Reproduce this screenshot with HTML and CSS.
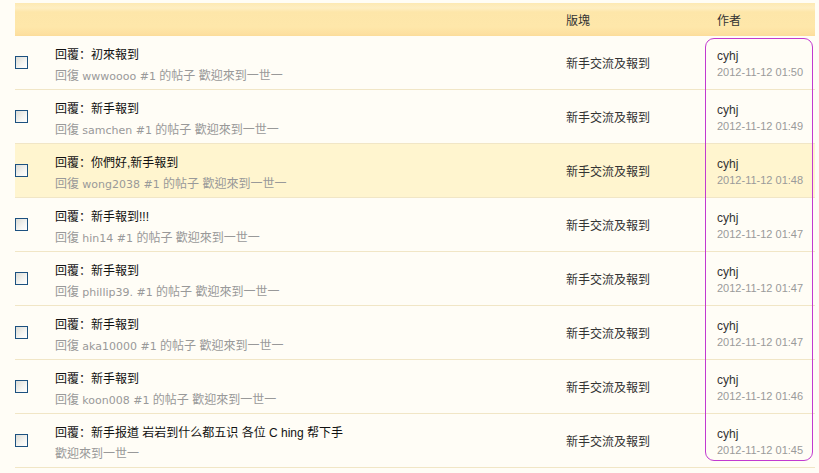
FILE: index.html
```html
<!DOCTYPE html>
<html lang="zh-Hant">
<head>
<meta charset="utf-8">
<title>帖子列表</title>
<link rel="stylesheet" href="styles.css">
</head>
<body>
<div class="list">
  <div class="head">
    <div></div>
    <div></div>
    <div class="h-forum">版塊</div>
    <div class="h-author">作者</div>
  </div>

  <div class="row">
    <div class="cb"><span class="box"></span></div>
    <div class="topic"><div class="t">回覆<span class="colon" lang="zh-Hans">：</span>初來報到</div><div class="s">回復 <span class="u">wwwoooo #1</span> 的帖子 歡迎來到一世一</div></div>
    <div class="forum">新手交流及報到</div>
    <div class="author"><div class="name">cyhj</div><div class="date">2012-11-12 01:50</div></div>
  </div>
  <div class="row">
    <div class="cb"><span class="box"></span></div>
    <div class="topic"><div class="t">回覆<span class="colon" lang="zh-Hans">：</span>新手報到</div><div class="s">回復 <span class="u">samchen #1</span> 的帖子 歡迎來到一世一</div></div>
    <div class="forum">新手交流及報到</div>
    <div class="author"><div class="name">cyhj</div><div class="date">2012-11-12 01:49</div></div>
  </div>
  <div class="row hl">
    <div class="cb"><span class="box"></span></div>
    <div class="topic"><div class="t">回覆<span class="colon" lang="zh-Hans">：</span>你們好,新手報到</div><div class="s">回復 <span class="u">wong2038 #1</span> 的帖子 歡迎來到一世一</div></div>
    <div class="forum">新手交流及報到</div>
    <div class="author"><div class="name">cyhj</div><div class="date">2012-11-12 01:48</div></div>
  </div>
  <div class="row">
    <div class="cb"><span class="box"></span></div>
    <div class="topic"><div class="t">回覆<span class="colon" lang="zh-Hans">：</span>新手報到!!!</div><div class="s">回復 <span class="u">hin14 #1</span> 的帖子 歡迎來到一世一</div></div>
    <div class="forum">新手交流及報到</div>
    <div class="author"><div class="name">cyhj</div><div class="date">2012-11-12 01:47</div></div>
  </div>
  <div class="row">
    <div class="cb"><span class="box"></span></div>
    <div class="topic"><div class="t">回覆<span class="colon" lang="zh-Hans">：</span>新手報到</div><div class="s">回復 <span class="u">phillip39. #1</span> 的帖子 歡迎來到一世一</div></div>
    <div class="forum">新手交流及報到</div>
    <div class="author"><div class="name">cyhj</div><div class="date">2012-11-12 01:47</div></div>
  </div>
  <div class="row">
    <div class="cb"><span class="box"></span></div>
    <div class="topic"><div class="t">回覆<span class="colon" lang="zh-Hans">：</span>新手報到</div><div class="s">回復 <span class="u">aka10000 #1</span> 的帖子 歡迎來到一世一</div></div>
    <div class="forum">新手交流及報到</div>
    <div class="author"><div class="name">cyhj</div><div class="date">2012-11-12 01:47</div></div>
  </div>
  <div class="row">
    <div class="cb"><span class="box"></span></div>
    <div class="topic"><div class="t">回覆<span class="colon" lang="zh-Hans">：</span>新手報到</div><div class="s">回復 <span class="u">koon008 #1</span> 的帖子 歡迎來到一世一</div></div>
    <div class="forum">新手交流及報到</div>
    <div class="author"><div class="name">cyhj</div><div class="date">2012-11-12 01:46</div></div>
  </div>
  <div class="row">
    <div class="cb"><span class="box"></span></div>
    <div class="topic"><div class="t">回覆<span class="colon" lang="zh-Hans">：</span>新手报道 岩岩到什么都五识 各位 C hing 帮下手</div><div class="s">歡迎來到一世一</div></div>
    <div class="forum">新手交流及報到</div>
    <div class="author"><div class="name">cyhj</div><div class="date">2012-11-12 01:45</div></div>
  </div>

  <div class="mark"></div>
</div>
</body>
</html>
```

FILE: styles.css
```css
html, body {
  margin: 0;
  padding: 0;
  background: #fffdf6;
}
body {
  font-family: "Liberation Sans", "Noto Sans CJK TC", sans-serif;
  font-size: 12px;
  color: #222;
}
.list {
  position: relative;
  width: 800px;
  margin: 3px 0 0 15px;
}
.head, .row {
  display: grid;
  grid-template-columns: 40px 511px 139px 110px;
}
.head {
  height: 33px;
  align-items: center;
  background: linear-gradient(#fde9b3 0px, #feeec2 5px, #fde6a9 9px, #fee7aa 24px, #fde0a0 31px, #fbdc9a 33px);
  color: #333;
}
.h-author { padding-left: 12px; }
.row {
  height: 53px;
  border-bottom: 1px solid #f1e6c6;
  background: #fffdf6;
}
.row.hl { background: #fff5cf; }
.cb {
  display: flex;
  align-items: center;
}
.box {
  display: block;
  width: 11px;
  height: 11px;
  border: 1px solid #1c5180;
  background: linear-gradient(135deg, #dcdcd6 0%, #f5f5f2 60%, #ffffff 100%);
}
.topic {
  padding-top: 7px;
  line-height: 21px;
}
.t { color: #111; }
.colon { font-family: "Noto Sans CJK SC", sans-serif; }
.s { color: #999; }
.u { font-family: "DejaVu Sans", sans-serif; font-size: 11px; }
.forum {
  display: flex;
  align-items: center;
  color: #333;
}
.author {
  padding: 12px 0 0 12px;
  line-height: 16px;
}
.name { color: #333; }
.date { color: #9a9a9a; font-size: 11px; }
.mark {
  position: absolute;
  left: 690px;
  top: 35px;
  width: 106px;
  height: 421px;
  border: 1.5px solid #c23ad0;
  border-radius: 9px;
  pointer-events: none;
}
```
